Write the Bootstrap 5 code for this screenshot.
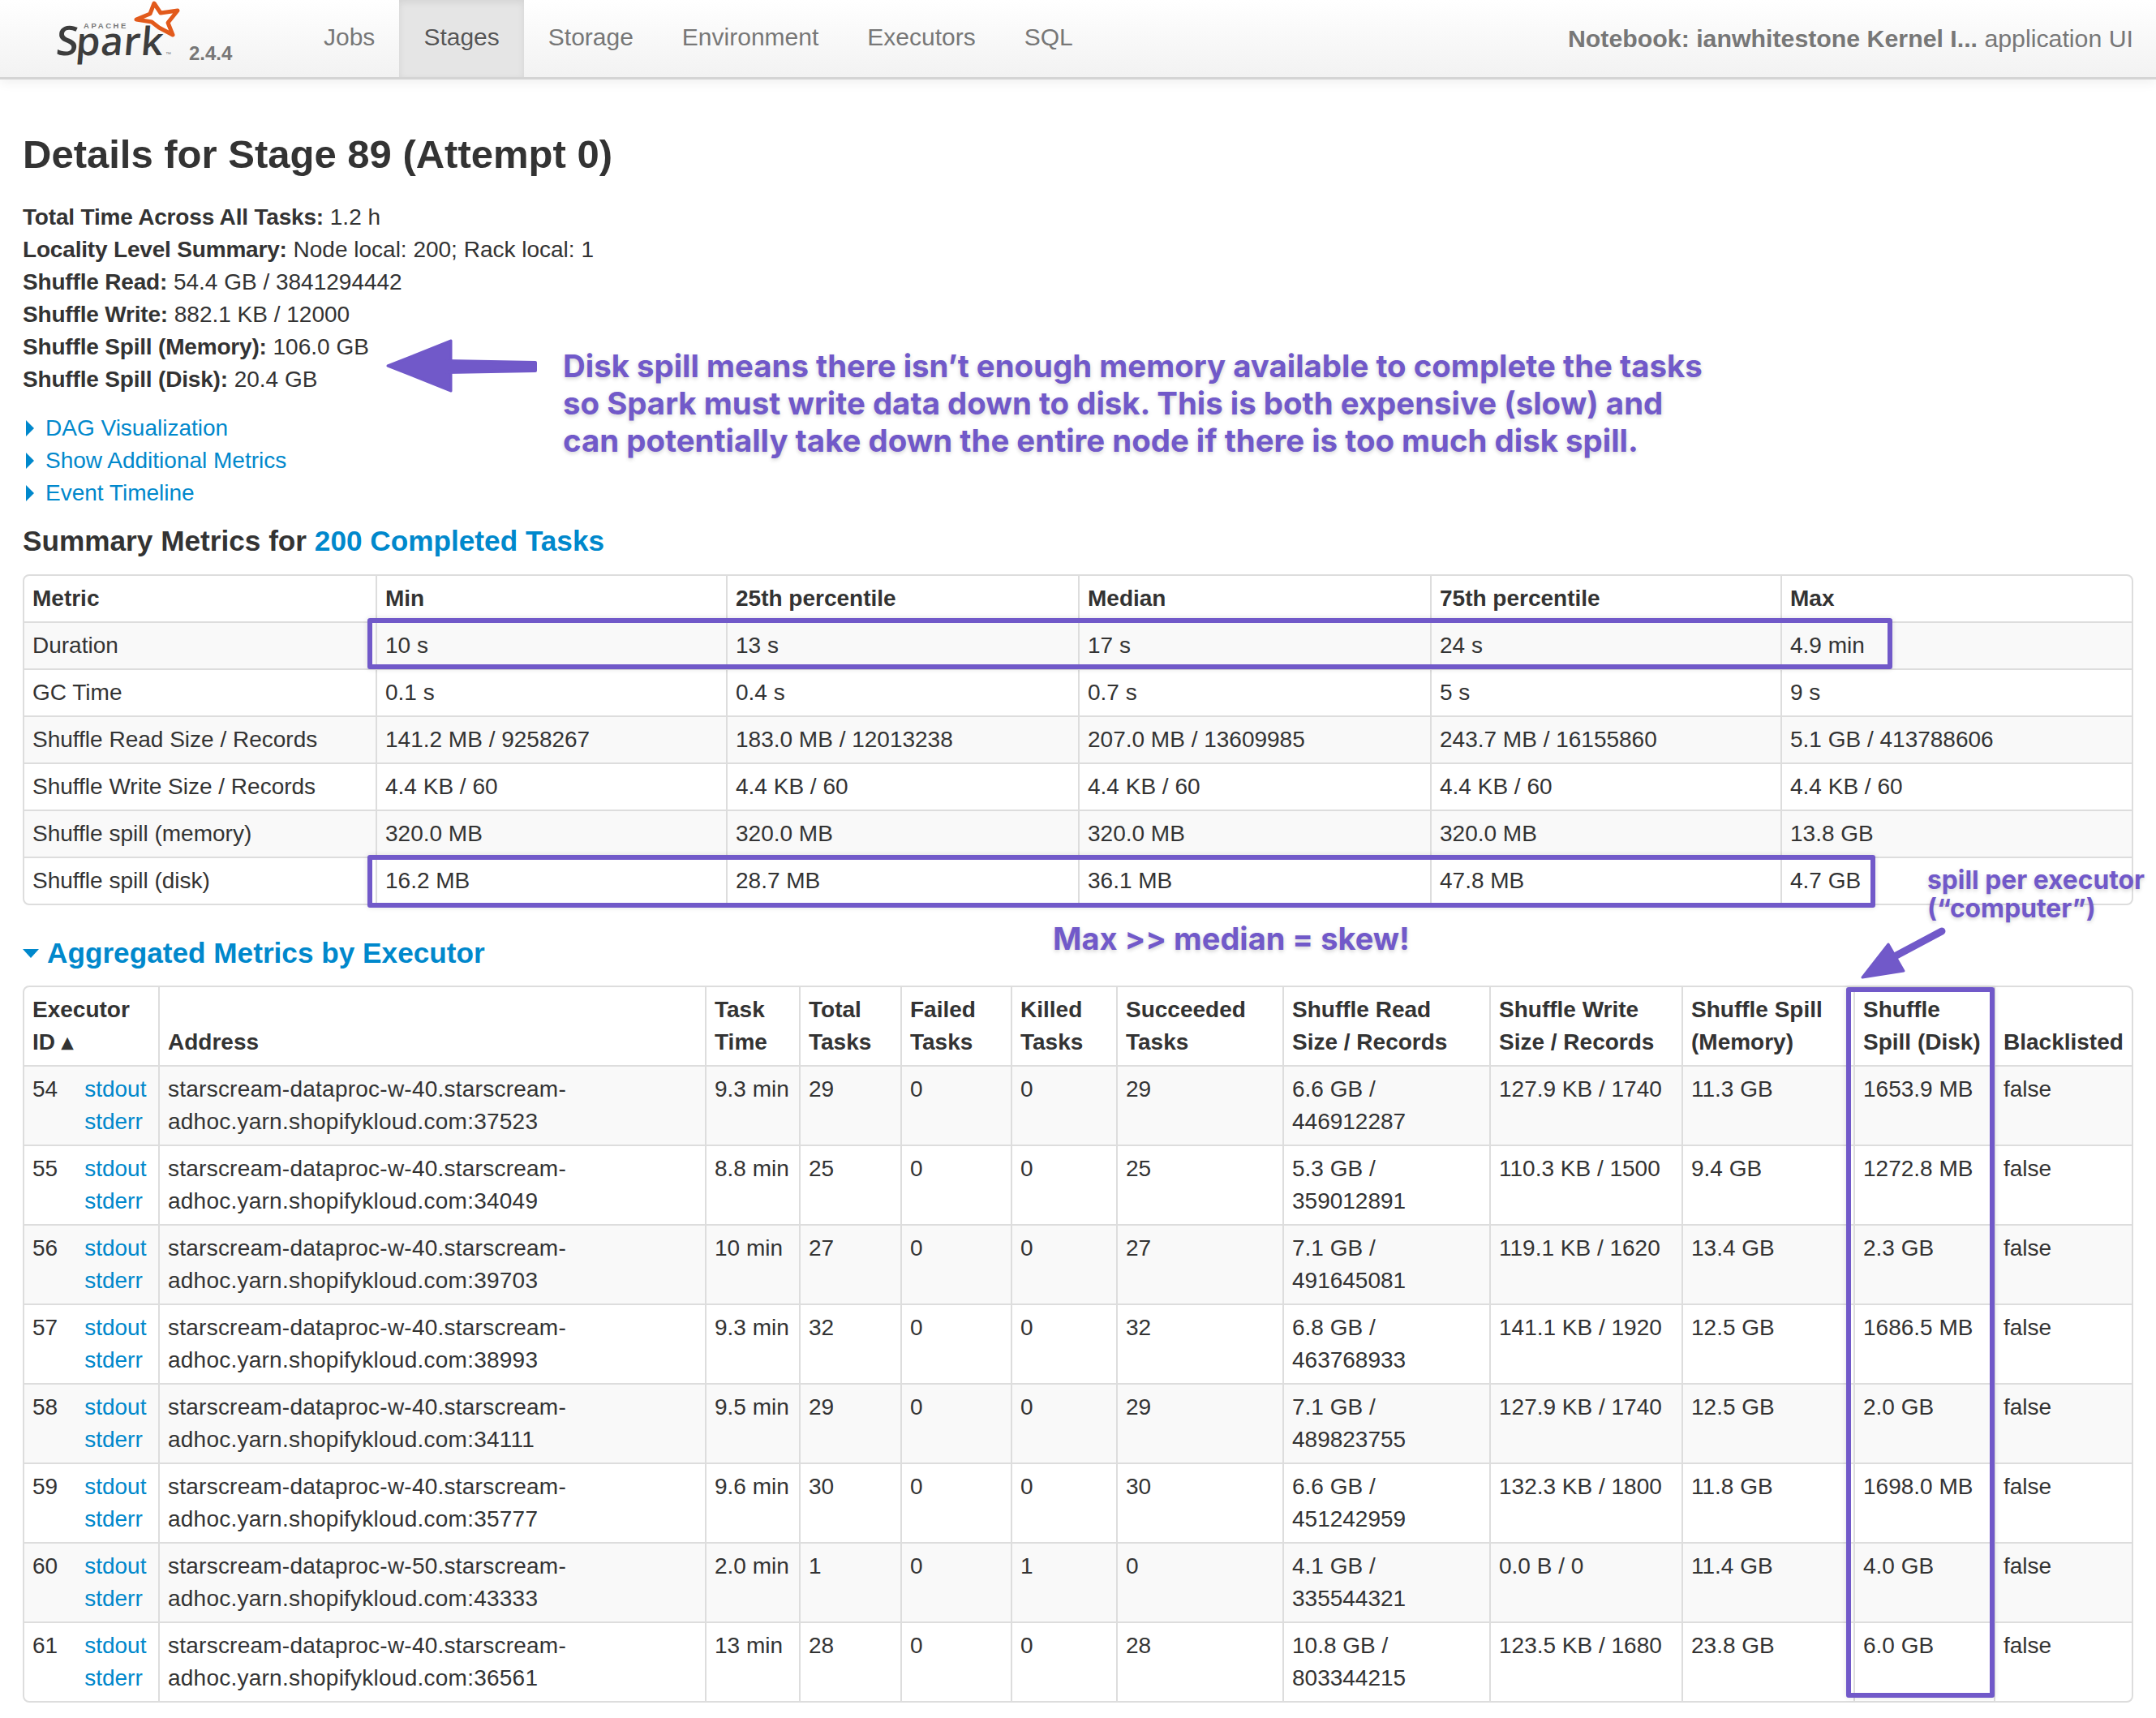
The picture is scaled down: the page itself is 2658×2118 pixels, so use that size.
<!DOCTYPE html>
<html lang="en">
<head>
    <meta charset="UTF-8">
    <meta name="viewport" content="width=device-width, initial-scale=1.0">
    <title>Details for Stage 89</title>
    <link href="https://cdn.jsdelivr.net/npm/bootstrap@5.3.0/dist/css/bootstrap.min.css" rel="stylesheet">
    <style>
        body { background: #fff; color: #333; font-family: "Liberation Sans", Arial, sans-serif; font-size: 28px; line-height: 40px; }
        a { color: #0088cc; text-decoration: none; }
        .top-bar { height: 98px; padding: 0; background: linear-gradient(#ffffff, #f2f2f2); border-bottom: 3px solid #d4d4d4; box-shadow: 0 3px 14px rgba(0,0,0,.07); flex-wrap: nowrap; }
        .brand-box { width: 369px; height: 95px; flex: none; }
        .top-bar .nav-link { height: 95px; padding: 0 30px !important; line-height: 92px; font-size: 30px; color: #777; text-shadow: 0 1px 0 #fff; }
        .top-bar .nav-link.active { color: #555; background: #e5e5e5; box-shadow: inset 0 3px 8px rgba(0,0,0,.08); }
        .app-name { font-size: 30.3px; color: #777; padding-right: 28px; }
        .page-body { padding: 52px 28px 0; }
        .stage-title { font-size: 49px; line-height: 80px; font-weight: 700; margin: 0 0 18px; }
        .info-list { margin: 0 0 20px; }
        .info-list strong { letter-spacing: -.18px; }
        .toggle-line { display: flex; align-items: center; height: 40px; }
        .toggle-line svg { margin: 0 14px 0 4px; }
        .sub-head { font-size: 35.2px; line-height: 40px; font-weight: 700; margin: 19px 0 21px; }
        .sub-head.exec-head { margin: 39px 0 20px; display: flex; align-items: center; color: #0088cc; }
        .exec-head svg { margin-right: 10px; }
        .spark-table { --bs-table-striped-bg: #f9f9f9; --bs-table-striped-color: #333; --bs-table-color: #333; table-layout: fixed; width: 2602px; margin: 0; border-collapse: separate; border-spacing: 0; border: 2px solid #ddd; border-radius: 8px; }
        .spark-table > :not(caption) > * > * { padding: 8px 10px; border-width: 0; border-style: solid; border-color: #ddd; border-left-width: 2px; border-top-width: 2px; line-height: 40px; vertical-align: top; white-space: nowrap; }
        .spark-table > :not(caption) > * > *:first-child { border-left-width: 0; }
        .spark-table > thead > tr > th { border-top-width: 0; vertical-align: bottom; font-weight: 700; line-height: 40px; }
        .spark-table > tbody > tr:last-child > td:first-child { border-bottom-left-radius: 8px; }
        .spark-table > tbody > tr:last-child > td:last-child { border-bottom-right-radius: 8px; }
        .log-links { display: flex; flex-direction: column; margin-left: 33px; }
        .host-cell { letter-spacing: .24px; }
        /* annotations drawn on top of the screenshot */
        .anno-layer { position: absolute; inset: 0; pointer-events: none; }
        .anno-box { position: absolute; border: 6px solid #7159c9; border-radius: 3px; box-shadow: 0 0 6px rgba(0,0,0,.12); }
        .anno-text { position: absolute; color: #7159c9; font-family: Inter, "Liberation Sans", sans-serif; font-weight: 700; text-shadow: 0 2px 5px rgba(0,0,0,.18); white-space: nowrap; }
        .anno-main { left: 694px; top: 428px; font-size: 38.4px; line-height: 46px; }
        .anno-median { left: 1298px; top: 1134px; font-size: 38px; line-height: 46px; }
        .anno-exec { left: 2376px; top: 1067px; font-size: 31.8px; line-height: 35px; }
        .box-duration { left: 453px; top: 762px; width: 1880px; height: 63px; }
        .box-disk { left: 453px; top: 1054px; width: 1859px; height: 65px; }
        .box-exec { left: 2276px; top: 1217px; width: 183px; height: 876px; }
        .anno-arrows { position: absolute; left: 0; top: 0; }
    </style>
</head>
<body>
    <div class="position-relative">
        <nav class="navbar navbar-expand top-bar">
            <div class="brand-box">
                <svg width="365" height="95" viewBox="0 0 365 95">
                    <polygon points="190,4 198,16 219,13 207,28 213,43 196,34 187,27 168,24 185,17" fill="#fff" stroke="#e25a1c" stroke-width="5" stroke-linejoin="round"/>
                    <text x="103" y="35" font-family="Liberation Sans" font-size="9.5" font-weight="700" letter-spacing="2.6" fill="#777">APACHE</text>
                    <text transform="skewX(-5)" font-family="Open Sans" font-weight="600" fill="#3d3d3d" y="68"><tspan x="74" font-size="50" letter-spacing="-3">S</tspan><tspan font-size="48" letter-spacing=".5">park</tspan></text>
                    <text x="204" y="69" font-family="Liberation Sans" font-size="7" fill="#777">™</text>
                    <text x="233" y="74" font-family="Liberation Sans" font-size="24" font-weight="700" fill="#777">2.4.4</text>
                </svg>
            </div>
            <ul class="navbar-nav">
                <li class="nav-item"><a class="nav-link" href="#">Jobs</a></li>
                <li class="nav-item"><a class="nav-link active" href="#">Stages</a></li>
                <li class="nav-item"><a class="nav-link" href="#">Storage</a></li>
                <li class="nav-item"><a class="nav-link" href="#">Environment</a></li>
                <li class="nav-item"><a class="nav-link" href="#">Executors</a></li>
                <li class="nav-item"><a class="nav-link" href="#">SQL</a></li>
            </ul>
            <div class="ms-auto app-name"><strong>Notebook: ianwhitestone Kernel I...</strong> application UI</div>
        </nav>

        <div class="page-body">
            <h3 class="stage-title">Details for Stage 89 (Attempt 0)</h3>
            <div class="info-list">
                <div><strong>Total Time Across All Tasks:</strong> 1.2 h</div>
                <div><strong>Locality Level Summary:</strong> Node local: 200; Rack local: 1</div>
                <div><strong>Shuffle Read:</strong> 54.4 GB / 3841294442</div>
                <div><strong>Shuffle Write:</strong> 882.1 KB / 12000</div>
                <div><strong>Shuffle Spill (Memory):</strong> 106.0 GB</div>
                <div><strong>Shuffle Spill (Disk):</strong> 20.4 GB</div>
            </div>
            <div class="toggle-line"><svg width="10" height="20" viewBox="0 0 10 20"><polygon points="0,0 10,10 0,20" fill="#0088cc"/></svg><a href="#">DAG Visualization</a></div>
            <div class="toggle-line"><svg width="10" height="20" viewBox="0 0 10 20"><polygon points="0,0 10,10 0,20" fill="#0088cc"/></svg><a href="#">Show Additional Metrics</a></div>
            <div class="toggle-line"><svg width="10" height="20" viewBox="0 0 10 20"><polygon points="0,0 10,10 0,20" fill="#0088cc"/></svg><a href="#">Event Timeline</a></div>

            <h4 class="sub-head">Summary Metrics for <a href="#">200 Completed Tasks</a></h4>
            <table class="table table-striped spark-table">
                <colgroup id="summaryCols"></colgroup>
                <thead><tr id="summaryHead"></tr></thead>
                <tbody id="summaryBody"></tbody>
            </table>

            <h4 class="sub-head exec-head"><svg width="20" height="11" viewBox="0 0 20 11"><polygon points="0,0 20,0 10,11" fill="#0088cc"/></svg>Aggregated Metrics by Executor</h4>
            <table class="table table-striped spark-table">
                <colgroup id="execCols"></colgroup>
                <thead><tr id="execHead"></tr></thead>
                <tbody id="execBody"></tbody>
            </table>
        </div>

        <div class="anno-layer">
            <svg class="anno-arrows" width="2658" height="2118" viewBox="0 0 2658 2118">
                <polygon points="478,451 556,420 556,482" fill="#7159c9" stroke="#7159c9" stroke-width="3" stroke-linejoin="round"/>
                <polygon points="550,445 660,447 660,457 550,459" fill="#7159c9" stroke="#7159c9" stroke-width="4" stroke-linejoin="round"/>
                <polygon points="2296,1205 2328,1164 2347,1197" fill="#7159c9" stroke="#7159c9" stroke-width="3" stroke-linejoin="round"/>
                <line x1="2334" y1="1180" x2="2394" y2="1148" stroke="#7159c9" stroke-width="9" stroke-linecap="round"/>
            </svg>
            <div class="anno-box box-duration"></div>
            <div class="anno-box box-disk"></div>
            <div class="anno-box box-exec"></div>
            <div class="anno-text anno-main">Disk spill means there isn’t enough memory available to complete the tasks<br>so Spark must write data down to disk. This is both expensive (slow) and<br>can potentially take down the entire node if there is too much disk spill.</div>
            <div class="anno-text anno-median">Max &gt;&gt; median = skew!</div>
            <div class="anno-text anno-exec">spill per executor<br>(“computer”)</div>
        </div>
    </div>

    <script>
        // table has its own 2px border, so the outer columns give up 2px each
        const summaryWidths = [433, 432, 434, 434, 432, 433];
        const summaryHead = ["Metric", "Min", "25th percentile", "Median", "75th percentile", "Max"];
        const summaryRows = [
            ["Duration", "10 s", "13 s", "17 s", "24 s", "4.9 min"],
            ["GC Time", "0.1 s", "0.4 s", "0.7 s", "5 s", "9 s"],
            ["Shuffle Read Size / Records", "141.2 MB / 9258267", "183.0 MB / 12013238", "207.0 MB / 13609985", "243.7 MB / 16155860", "5.1 GB / 413788606"],
            ["Shuffle Write Size / Records", "4.4 KB / 60", "4.4 KB / 60", "4.4 KB / 60", "4.4 KB / 60", "4.4 KB / 60"],
            ["Shuffle spill (memory)", "320.0 MB", "320.0 MB", "320.0 MB", "320.0 MB", "13.8 GB"],
            ["Shuffle spill (disk)", "16.2 MB", "28.7 MB", "36.1 MB", "47.8 MB", "4.7 GB"]
        ];
        const execWidths = [165, 674, 116, 125, 136, 130, 205, 255, 237, 212, 173, 170];
        const execHead = ["Executor<br>ID ▴", "Address", "Task<br>Time", "Total<br>Tasks", "Failed<br>Tasks", "Killed<br>Tasks", "Succeeded<br>Tasks", "Shuffle Read<br>Size / Records", "Shuffle Write<br>Size / Records", "Shuffle Spill<br>(Memory)", "Shuffle<br>Spill (Disk)", "Blacklisted"];
        const execRows = [
            ["54", "40", "37523", "9.3 min", "29", "0", "0", "29", "6.6 GB /", "446912287", "127.9 KB / 1740", "11.3 GB", "1653.9 MB"],
            ["55", "40", "34049", "8.8 min", "25", "0", "0", "25", "5.3 GB /", "359012891", "110.3 KB / 1500", "9.4 GB", "1272.8 MB"],
            ["56", "40", "39703", "10 min", "27", "0", "0", "27", "7.1 GB /", "491645081", "119.1 KB / 1620", "13.4 GB", "2.3 GB"],
            ["57", "40", "38993", "9.3 min", "32", "0", "0", "32", "6.8 GB /", "463768933", "141.1 KB / 1920", "12.5 GB", "1686.5 MB"],
            ["58", "40", "34111", "9.5 min", "29", "0", "0", "29", "7.1 GB /", "489823755", "127.9 KB / 1740", "12.5 GB", "2.0 GB"],
            ["59", "40", "35777", "9.6 min", "30", "0", "0", "30", "6.6 GB /", "451242959", "132.3 KB / 1800", "11.8 GB", "1698.0 MB"],
            ["60", "50", "43333", "2.0 min", "1", "0", "1", "0", "4.1 GB /", "335544321", "0.0 B / 0", "11.4 GB", "4.0 GB"],
            ["61", "40", "36561", "13 min", "28", "0", "0", "28", "10.8 GB /", "803344215", "123.5 KB / 1680", "23.8 GB", "6.0 GB"]
        ];

        function fillCols(id, widths) {
            document.getElementById(id).innerHTML = widths.map(w => `<col style="width:${w}px">`).join("");
        }

        fillCols("summaryCols", summaryWidths);
        fillCols("execCols", execWidths);
        document.getElementById("summaryHead").innerHTML = summaryHead.map(h => `<th>${h}</th>`).join("");
        document.getElementById("summaryBody").innerHTML = summaryRows.map(r =>
            `<tr>${r.map(c => `<td>${c}</td>`).join("")}</tr>`).join("");
        document.getElementById("execHead").innerHTML = execHead.map(h => `<th>${h}</th>`).join("");
        document.getElementById("execBody").innerHTML = execRows.map(r => `
            <tr>
                <td><div class="d-flex"><span>${r[0]}</span><span class="log-links"><a href="#">stdout</a><a href="#">stderr</a></span></div></td>
                <td class="host-cell">starscream-dataproc-w-${r[1]}.starscream-<br>adhoc.yarn.shopifykloud.com:${r[2]}</td>
                <td>${r[3]}</td><td>${r[4]}</td><td>${r[5]}</td><td>${r[6]}</td><td>${r[7]}</td>
                <td>${r[8]}<br>${r[9]}</td>
                <td>${r[10]}</td><td>${r[11]}</td><td>${r[12]}</td><td>false</td>
            </tr>`).join("");
    </script>
    <script src="https://cdn.jsdelivr.net/npm/bootstrap@5.3.0/dist/js/bootstrap.bundle.min.js"></script>
</body>
</html>
